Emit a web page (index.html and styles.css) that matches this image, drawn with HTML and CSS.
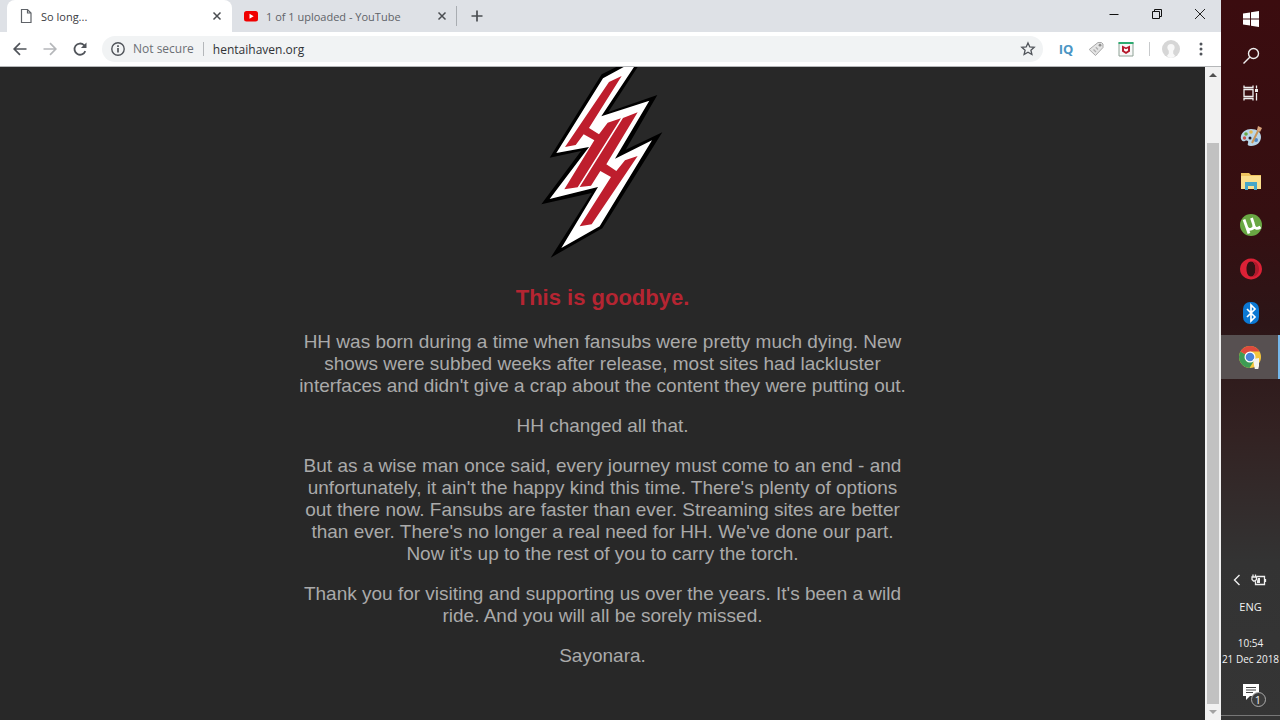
FILE: index.html
```
<!DOCTYPE html>
<html lang="en">
<head>
  <meta charset="UTF-8">
  <title>So long...</title>
  <link rel="stylesheet" href="styles.css">
</head>
<body>
  <div class="desktop">
    <div class="browser">
      <div class="tab-strip">
        <div class="tab active">
          <svg class="tab-icon" viewBox="0 0 16 16" fill="none" stroke="#5f6368" stroke-width="1.2"><path d="M3.5 1.5h6l3.500 3.500v9.500h-9.500zM9.500 1.500v3.500h3.500"/></svg>
          <span class="tab-title">So long...</span>
          <button class="tab-close" aria-label="Close tab"><svg viewBox="0 0 10 10" stroke="#4a4d51" stroke-width="1.5"><path d="M1.500 1.500l7 7M8.500 1.500l-7 7"/></svg></button>
        </div>
        <div class="tab">
          <svg class="tab-icon" viewBox="0 0 16 16"><rect x="1" y="3" width="14" height="10.500" rx="2.500" fill="#f00000"/><path d="M6.500 5.800v5l4.200-2.500z" fill="#fff"/></svg>
          <span class="tab-title">1 of 1 uploaded - YouTube</span>
          <button class="tab-close" aria-label="Close tab"><svg viewBox="0 0 10 10" stroke="#4a4d51" stroke-width="1.5"><path d="M1.500 1.500l7 7M8.500 1.500l-7 7"/></svg></button>
        </div>
        <button class="new-tab" aria-label="New tab"><svg viewBox="0 0 12 12" stroke="#4a4d51" stroke-width="1.7"><path d="M6 .5v11M.5 6h11"/></svg></button>
        <div class="window-controls">
          <button aria-label="Minimize"><svg viewBox="0 0 12 12" stroke="#111"><path d="M1.500 6.500h9"/></svg></button>
          <button aria-label="Restore"><svg viewBox="0 0 12 12" fill="none" stroke="#111"><path d="M1.500 3.500h7v7h-7zM3.500 3.500v-2h7v7h-2"/></svg></button>
          <button aria-label="Close"><svg viewBox="0 0 12 12" stroke="#222"><path d="M1 1l10 10M11 1l-10 10"/></svg></button>
        </div>
      </div>

      <div class="toolbar">
        <button class="tool" aria-label="Back"><svg viewBox="0 0 16 16" fill="none" stroke="#50545a" stroke-width="1.7"><path d="M14.500 8h-12M8 2.200l-5.800 5.800 5.800 5.800"/></svg></button>
        <button class="tool" aria-label="Forward"><svg viewBox="0 0 16 16" fill="none" stroke="#b5b7ba" stroke-width="1.7"><path d="M1.500 8h12M8 2.200l5.800 5.800-5.800 5.800"/></svg></button>
        <button class="tool" aria-label="Reload"><svg viewBox="0 0 16 16" fill="none" stroke="#50545a" stroke-width="1.800"><path d="M13.300 10.200a5.600 5.600 0 1 1-1.300-6.100l1.500 1.500"/><path d="M14.500 1.500v5.600h-5.600z" fill="#50545a" stroke="none"/></svg></button>
        <div class="omnibox">
          <svg class="info-icon" viewBox="0 0 16 16" fill="none" stroke="#50545a" stroke-width="1.400"><circle cx="8" cy="8" r="6.200"/><path d="M8 7v4.500M8 4.300v1.600" stroke-width="1.700"/></svg>
          <label class="security" for="url">Not secure</label>
          <input id="url" class="url" type="text" value="hentaihaven.org">
          <button class="tool" aria-label="Bookmark"><svg viewBox="0 0 16 16" fill="none" stroke="#50545a" stroke-width="1.300"><path d="M8 1.900l1.800 4 4.400.4-3.300 2.900 1 4.300-3.900-2.300-3.900 2.300 1-4.300-3.300-2.900 4.400-.4z"/></svg></button>
        </div>
        <button class="tool iq">IQ</button>
        <button class="tool" aria-label="Tags"><svg viewBox="0 0 16 16"><path d="M10 1.500h3.500l1.500 1.500v3.500l-7.500 8-6.300-6z" fill="#e4e4e4" stroke="#a9a9a9" stroke-linejoin="round"/><circle cx="12" cy="4.200" r="1.400" fill="#8f8f8f"/><path d="M5.500 8.500l2.500 2.500M7.800 6.300l2.200 2.200" stroke="#b0b0b0" stroke-width="1.400"/></svg></button>
        <button class="tool" aria-label="WebAdvisor"><svg viewBox="0 0 16 16"><path d="M1 1.500h14v13.500h-14z" fill="#f7f7f7" stroke="#8fa296"/><path d="M.5 1h15v2h-15z" fill="#2cab70"/><path d="M4 4.500l4 2 4-2v6l-4 2.500-4-2.500z" fill="#b51a2c"/><path d="M6 7.300v2.200l2 1.200 2-1.200v-2.200l-2 1z" fill="#fff"/></svg></button>
        <span class="divider"></span>
        <button class="tool" aria-label="Profile"><svg class="avatar" viewBox="0 0 18 18"><circle cx="9" cy="9" r="9" fill="#d6d6d6"/><circle cx="9" cy="7.500" r="3.600" fill="#f8f8f8"/><path d="M6.800 10h4.400v3.500l2 2.500q-4.200 4-8.400 0l2-2.500z" fill="#f8f8f8"/></svg></button>
        <button class="tool menu" aria-label="Menu"><svg viewBox="0 0 16 16" fill="#50545a"><circle cx="8" cy="3" r="1.500"/><circle cx="8" cy="8" r="1.500"/><circle cx="8" cy="13" r="1.500"/></svg></button>
      </div>

      <div class="viewport">
        <main class="page">
          <svg class="logo" viewBox="36 20 372 576">
            <path fill="#000" d="M262 20L218 42 62 292 156 272 37 432 188 398 65 592 220 504 400 216 290 268 385 104 238 155 326 20z"/>
            <path fill="#fff" d="M284 20L222 54 82 278 180 260 62 416 207 380 97 563 212 498 369 240 258 295 361 121 217 168 315 20z"/>
            <path fill="#be1e2d" d="M240 65L278 47 180 203 210 222 236 187 276 174 146 381 106 387 196 240 164 222 140 254 108 260z"/>
            <path fill="#be1e2d" d="M282 173L326 156 232 312 262 332 288 300 326 287 188 492 152 498 246 350 214 332 186 376 152 380z"/>
          </svg>
          <h1>This is goodbye.</h1>
          <p>HH was born during a time when fansubs were pretty much dying. New shows were subbed weeks after release, most sites had lackluster interfaces and didn't give a crap about the content they were putting out.</p>
          <p>HH changed all that.</p>
          <p>But as a wise man once said, every journey must come to an end - and unfortunately, it ain't the happy kind this time. There's plenty of options out there now. Fansubs are faster than ever. Streaming sites are better than ever. There's no longer a real need for HH. We've done our part. Now it's up to the rest of you to carry the torch.</p>
          <p>Thank you for visiting and supporting us over the years. It's been a wild ride. And you will all be sorely missed.</p>
          <p>Sayonara.</p>
        </main>
        <div class="scrollbar">
          <svg class="arrow" viewBox="0 0 10 10"><path d="M1 7l4-4 4 4z" fill="#505050"/></svg>
          <div class="track"><div class="thumb"></div></div>
          <svg class="arrow" viewBox="0 0 10 10"><path d="M1 3l4 4 4-4z" fill="#a3a3a3"/></svg>
        </div>
      </div>
    </div>

    <div class="taskbar">
      <button class="system" aria-label="Start"><svg viewBox="0 0 18 18" fill="#fff"><path d="M1 3.500l7-1v6h-7zM9 2.300l8-1.300v7.500h-8zM1 9.500h7v6l-7-1zM9 9.500h8v7.500l-8-1.300z"/></svg></button>
      <button class="system" aria-label="Search"><svg viewBox="0 0 18 18" fill="none" stroke="#eee" stroke-width="1.400"><circle cx="11.500" cy="6.500" r="5"/><path d="M8 10l-6.500 6.500"/></svg></button>
      <button class="system" aria-label="Task view"><svg viewBox="0 0 18 18" fill="none" stroke="#eee" stroke-width="1.300"><path d="M2 5.500h9v7h-9zM2 1.500v2h9v-2M2 16.500v-2h9v2M14.500 1.500v3M14.500 9v7.500"/><path d="M13 5h3v3h-3z" fill="#eee" stroke="none"/></svg></button>
      <div class="apps">
        <button aria-label="Paint"><svg viewBox="0 0 24 24"><path d="M12 4c6 0 10 3 10 8s-4 9-10 9c-3 0-4-1-3-3s-1-3-3-2-5-1-4-5 5-7 10-7z" fill="#b9d6e8"/><circle cx="7" cy="9" r="1.800" fill="#69a843"/><circle cx="12" cy="7" r="1.800" fill="#e5b951"/><circle cx="5.500" cy="13" r="1.700" fill="#c8534c"/><circle cx="17" cy="15" r="2" fill="#4c86c4"/><circle cx="11" cy="13" r="1.500" fill="#2b1a22"/><path d="M20 4l-7 14" stroke="#c99557" stroke-width="2"/><path d="M18 5l1-4 2 1 2 1-2 4z" fill="#d8a47c"/></svg></button>
        <button aria-label="File Explorer"><svg viewBox="0 0 24 24"><path d="M2 4h8l2 2h10v14h-20z" fill="#efc45f"/><path d="M2 7h20v13h-20z" fill="#fbdf8d"/><path d="M6 13h12v8h-3v-4h-6v4h-3z" fill="#45a6c8"/></svg></button>
        <button aria-label="uTorrent"><svg viewBox="0 0 24 24"><circle cx="12" cy="12" r="11" fill="#69a743"/><path d="M5 6.500l5 14M7 12c1 4 3 5 5.500 4s3-2.500 2-5l-2-6M14.500 12c1 3.500 3.500 4.500 7 2" fill="none" stroke="#fff" stroke-width="2.800"/></svg></button>
        <button aria-label="Opera"><svg viewBox="0 0 24 24"><path fill-rule="evenodd" fill="#dc2136" d="M12 1.500a11 10.500 0 1 0 .01 0zM12 4.500c3 0 4.500 3.500 4.500 7.500s-1.500 7.500-4.500 7.500-4.500-3.500-4.500-7.500 1.500-7.500 4.500-7.500z"/><path d="M12 4.500c5-1 8 3 8 7.500s-3 8.500-8 7.500c3 0 4.500-3.500 4.500-7.500s-1.500-7.500-4.500-7.500z" fill="#ad1a2c"/></svg></button>
        <button aria-label="Bluetooth"><svg viewBox="0 0 24 24"><rect x="4" y="1" width="16" height="22" rx="7" fill="#0b78d4"/><path d="M8 8l8 8-4 4v-16l4 4-8 8" fill="none" stroke="#fff" stroke-width="1.700"/></svg></button>
        <button class="running" aria-label="Chrome"><svg viewBox="0 0 24 24"><circle cx="12" cy="12" r="11" fill="#f5c63c"/><path d="M12 12L2.500 6.500a11 11 0 0 0 9 16.500l5-8z" fill="#3d9b54"/><path d="M12 12L2.500 6.500a11 11 0 0 1 19.100 0h-9.600z" fill="#dd4a3d"/><circle cx="12" cy="12" r="5.500" fill="#fff"/><circle cx="12" cy="12" r="4.300" fill="#4a82d8"/><path d="M15 14l6-1v8l-1 4h-3l-1-5z" fill="#f4f4ee"/></svg></button>
      </div>
      <div class="tray">
        <div class="tray-icons">
          <button aria-label="Show hidden icons"><svg viewBox="0 0 16 16" fill="none" stroke="#eee" stroke-width="1.400"><path d="M10.500 3l-5 5 5 5"/></svg></button>
          <button aria-label="Battery"><svg viewBox="0 0 16 16" fill="none" stroke="#eee" stroke-width="1.300"><path d="M5.500 4.500h8v8h-9v-3M14.500 7v3M1 5h4.500v2.500l-1.500 1.500h-1.500l-1.500-1.500zM2 2.500v2.500M4.500 2.500v2.500"/><path d="M7 6h2v5h-3v-2z" fill="#eee" stroke="none"/></svg></button>
        </div>
        <span class="language">ENG</span>
        <div class="clock"><time>10:54</time><span>21 Dec 2018</span></div>
        <button class="notifications" aria-label="Notifications"><svg viewBox="0 0 18 18"><path d="M1 1h16v12h-9l-4 4v-4h-3z" fill="#fff"/><path d="M4 4.500h10M4 7h10M4 9.500h7" stroke="#444"/></svg><span class="badge">1</span></button>
      </div>
    </div>
  </div>
</body>
</html>
```
FILE: styles.css
```
* {
  box-sizing: border-box;
}

body {
  margin: 0;
  font-family: "Open Sans", "Noto Sans", sans-serif;
  font-size: 12px;
  color: #3c4043;
}

button {
  display: flex;
  align-items: center;
  justify-content: center;
  padding: 0;
  border: none;
  background: none;
  color: inherit;
  font: inherit;
}

.desktop {
  display: flex;
  height: 100vh;
  overflow: hidden;
}

.browser {
  flex: 1;
  min-width: 0;
  display: flex;
  flex-direction: column;
  background-color: #fff;
}

/* Tabs */
.tab-strip {
  display: flex;
  flex-shrink: 0;
  height: 32px;
  padding-left: 7px;
  background-color: #dee1e6;
}

.tab {
  display: flex;
  align-items: center;
  width: 225px;
  padding: 0 9px 0 11px;
  border-right: 1px solid transparent;
  font-size: 11px;
  color: #5f6368;
}

.tab.active {
  background-color: #fff;
  border-radius: 8px 8px 0 0;
  color: #3c4043;
}

.tab:not(.active) {
  margin: 6px 0;
  border-right-color: #a9adb2;
}

.tab-icon {
  width: 16px;
  height: 16px;
  margin-right: 7px;
}

.tab-title {
  flex: 1;
  white-space: nowrap;
}

.tab-close {
  width: 10px;
  height: 16px;
}

.tab-close svg {
  width: 10px;
}

.new-tab {
  width: 40px;
}

.new-tab svg {
  width: 12px;
}

.window-controls {
  display: flex;
  margin-left: auto;
}

.window-controls button {
  width: 43px;
  height: 27px;
}

.window-controls svg {
  width: 12px;
}

/* Toolbar */
.toolbar {
  display: flex;
  align-items: center;
  flex-shrink: 0;
  height: 35px;
  padding: 0 5px;
  border-bottom: 1px solid #b5b7b9;
}

.tool {
  width: 30px;
  height: 26px;
}

.tool svg {
  width: 16px;
  height: 16px;
}

.tool .avatar {
  width: 18px;
  height: 18px;
}

.omnibox {
  flex: 1;
  display: flex;
  align-items: center;
  height: 26px;
  margin: 0 8px 0 7px;
  padding: 0 0 0 8px;
  border-radius: 13px;
  background-color: #f1f3f4;
}

.info-icon {
  width: 16px;
  height: 16px;
  margin-right: 7px;
}

.security {
  padding-right: 9px;
  border-right: 1px solid #b4b7ba;
  line-height: 14px;
  color: #6b6f74;
}

.url {
  flex: 1;
  min-width: 0;
  padding: 0 9px;
  border: none;
  outline: none;
  background: none;
  font: inherit;
  color: #303236;
}

.iq {
  font-size: 13px;
  font-weight: bold;
  color: #4a95c4;
}

.divider {
  width: 1px;
  height: 14px;
  margin: 0 6px 0 8px;
  background-color: #c8cacc;
}

/* Page */
.viewport {
  flex: 1;
  display: flex;
  min-height: 0;
}

.page {
  flex: 1;
  display: flex;
  flex-direction: column;
  align-items: center;
  overflow: hidden;
  background-color: #282828;
  color: #aaa;
  font-family: "Liberation Sans", Arial, sans-serif;
  font-size: 19px;
  line-height: 22px;
  text-align: center;
}

.logo {
  flex-shrink: 0;
  width: 124px;
  height: 192px;
}

.page h1 {
  margin: 27px 0 21px;
  font-size: 22px;
  line-height: 24px;
  color: #b52532;
}

.page p {
  max-width: 612px;
  margin: 0 0 18px;
}

.scrollbar {
  display: flex;
  flex-direction: column;
  align-items: center;
  width: 16px;
  background-color: #f1f1f1;
}

.arrow {
  width: 10px;
  height: 16px;
}

.track {
  flex: 1;
  width: 12px;
  padding-top: 60px;
}

.thumb {
  height: 100%;
  background-color: #c1c1c1;
}

/* Taskbar */
.taskbar {
  display: flex;
  flex-direction: column;
  flex-shrink: 0;
  width: 59px;
  background: linear-gradient(#3b0c0f, #350f11 30%, #2c1517 45%, #332222 60%, #333 78%, #353535);
  color: #f2f2f2;
}

.system {
  height: 37px;
}

.system svg {
  width: 18px;
  height: 18px;
}

.apps {
  margin-top: 4px;
}

.apps button {
  width: 100%;
  height: 44px;
}

.apps svg {
  width: 24px;
  height: 24px;
}

.apps .running {
  background-color: #575051;
  border-right: 2px solid #76b9ed;
}

.tray {
  display: flex;
  flex-direction: column;
  align-items: center;
  margin-top: auto;
  border-bottom: 1px solid #777;
  margin-bottom: 4px;
}

.tray-icons {
  display: flex;
  gap: 6px;
  padding-right: 6px;
}

.tray-icons svg {
  width: 16px;
  height: 16px;
}

.language {
  margin-top: 11px;
  font-size: 11px;
  line-height: 16px;
}

.clock {
  display: flex;
  flex-direction: column;
  align-items: center;
  margin-top: 20px;
  font-size: 10px;
  line-height: 16px;
  white-space: nowrap;
}

.notifications {
  position: relative;
  width: 30px;
  height: 30px;
  margin: 10px 0 8px;
}

.notifications svg {
  width: 18px;
  height: 18px;
}

.badge {
  position: absolute;
  right: 0;
  bottom: 0;
  width: 15px;
  height: 15px;
  border: 1px solid #aaa;
  border-radius: 50%;
  background-color: #3b3b3b;
  font-size: 11px;
  line-height: 13px;
}
```
